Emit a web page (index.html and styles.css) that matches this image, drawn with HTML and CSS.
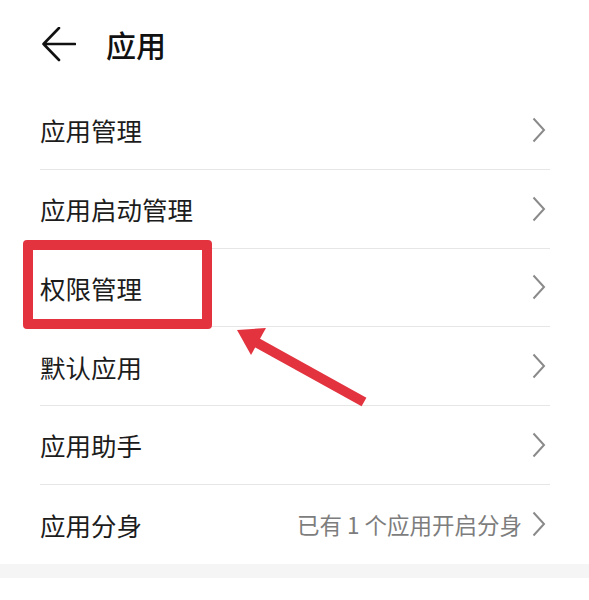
FILE: index.html
```html
<!DOCTYPE html>
<html lang="zh-CN">
<head>
<meta charset="utf-8">
<title>应用</title>
<link rel="stylesheet" href="styles.css">
</head>
<body>
<div class="page">
  <header class="header">
    <svg class="back" width="34" height="36" viewBox="0 0 34 36">
      <path d="M17 1 L1.5 17 L17 33 M1.5 17 H33" fill="none" stroke="#111" stroke-width="2.6" stroke-linecap="round" stroke-linejoin="round"/>
    </svg>
    <h1 class="title">应用</h1>
  </header>
  <ul class="list">
    <li class="row"><span class="label">应用管理</span><svg class="chev" width="14" height="26" viewBox="0 0 14 26"><path d="M1.5 1.5 L12 13 L1.5 24.5" fill="none" stroke="#8a8a8a" stroke-width="2"/></svg></li>
    <li class="row"><span class="label">应用启动管理</span><svg class="chev" width="14" height="26" viewBox="0 0 14 26"><path d="M1.5 1.5 L12 13 L1.5 24.5" fill="none" stroke="#8a8a8a" stroke-width="2"/></svg></li>
    <li class="row"><span class="label">权限管理</span><svg class="chev" width="14" height="26" viewBox="0 0 14 26"><path d="M1.5 1.5 L12 13 L1.5 24.5" fill="none" stroke="#8a8a8a" stroke-width="2"/></svg></li>
    <li class="row"><span class="label">默认应用</span><svg class="chev" width="14" height="26" viewBox="0 0 14 26"><path d="M1.5 1.5 L12 13 L1.5 24.5" fill="none" stroke="#8a8a8a" stroke-width="2"/></svg></li>
    <li class="row"><span class="label">应用助手</span><svg class="chev" width="14" height="26" viewBox="0 0 14 26"><path d="M1.5 1.5 L12 13 L1.5 24.5" fill="none" stroke="#8a8a8a" stroke-width="2"/></svg></li>
    <li class="row"><span class="label">应用分身</span><span class="value">已有 1 个应用开启分身</span><svg class="chev" width="14" height="26" viewBox="0 0 14 26"><path d="M1.5 1.5 L12 13 L1.5 24.5" fill="none" stroke="#8a8a8a" stroke-width="2"/></svg></li>
  </ul>
  <div class="band"></div>
  <div class="highlight"></div>
  <svg class="pointer" width="589" height="600" viewBox="0 0 589 600">
    <line x1="254" y1="341" x2="364" y2="402" stroke="#e2333f" stroke-width="10"/>
    <polygon points="237,330 266,328 251,355" fill="#e2333f"/>
  </svg>
</div>
</body>
</html>
```
FILE: styles.css
```css
html, body {
  margin: 0;
  padding: 0;
  background: #fff;
}
body {
  font-family: "Noto Sans CJK SC", "Noto Sans", sans-serif;
  color: #1a1a1a;
}
.page {
  position: relative;
  width: 589px;
  height: 600px;
  overflow: hidden;
}
.header {
  height: 91px;
  display: flex;
  align-items: center;
  padding-left: 42px;
  box-sizing: border-box;
}
.back {
  display: block;
  margin-top: -2px;
}
.title {
  margin: 0 0 0 30px;
  font-size: 30px;
  font-weight: 500;
  line-height: 1;
  margin-top: -4px;
  color: #111;
}
.list {
  list-style: none;
  margin: 0;
  padding: 0 39px 0 40px;
}
.row {
  height: 78.8px;
  box-sizing: border-box;
  display: flex;
  align-items: center;
  border-bottom: 1px solid #e6e6e6;
  padding-right: 4px;
}
.row:last-child {
  border-bottom: none;
}
.label {
  flex: 1;
  font-size: 25.5px;
  line-height: 1;
  color: #1c1c1c;
}
.value {
  font-size: 22.5px;
  line-height: 1;
  color: #7d7d7d;
  margin-right: 10px;
}
.chev {
  display: block;
  flex: none;
}
.band {
  height: 14px;
  background: #f5f5f5;
}
.highlight {
  position: absolute;
  left: 23px;
  top: 240px;
  width: 189px;
  height: 89px;
  box-sizing: border-box;
  border: 10px solid #e2333f;
  border-radius: 4px;
}
.pointer {
  position: absolute;
  left: 0;
  top: 0;
}
```
